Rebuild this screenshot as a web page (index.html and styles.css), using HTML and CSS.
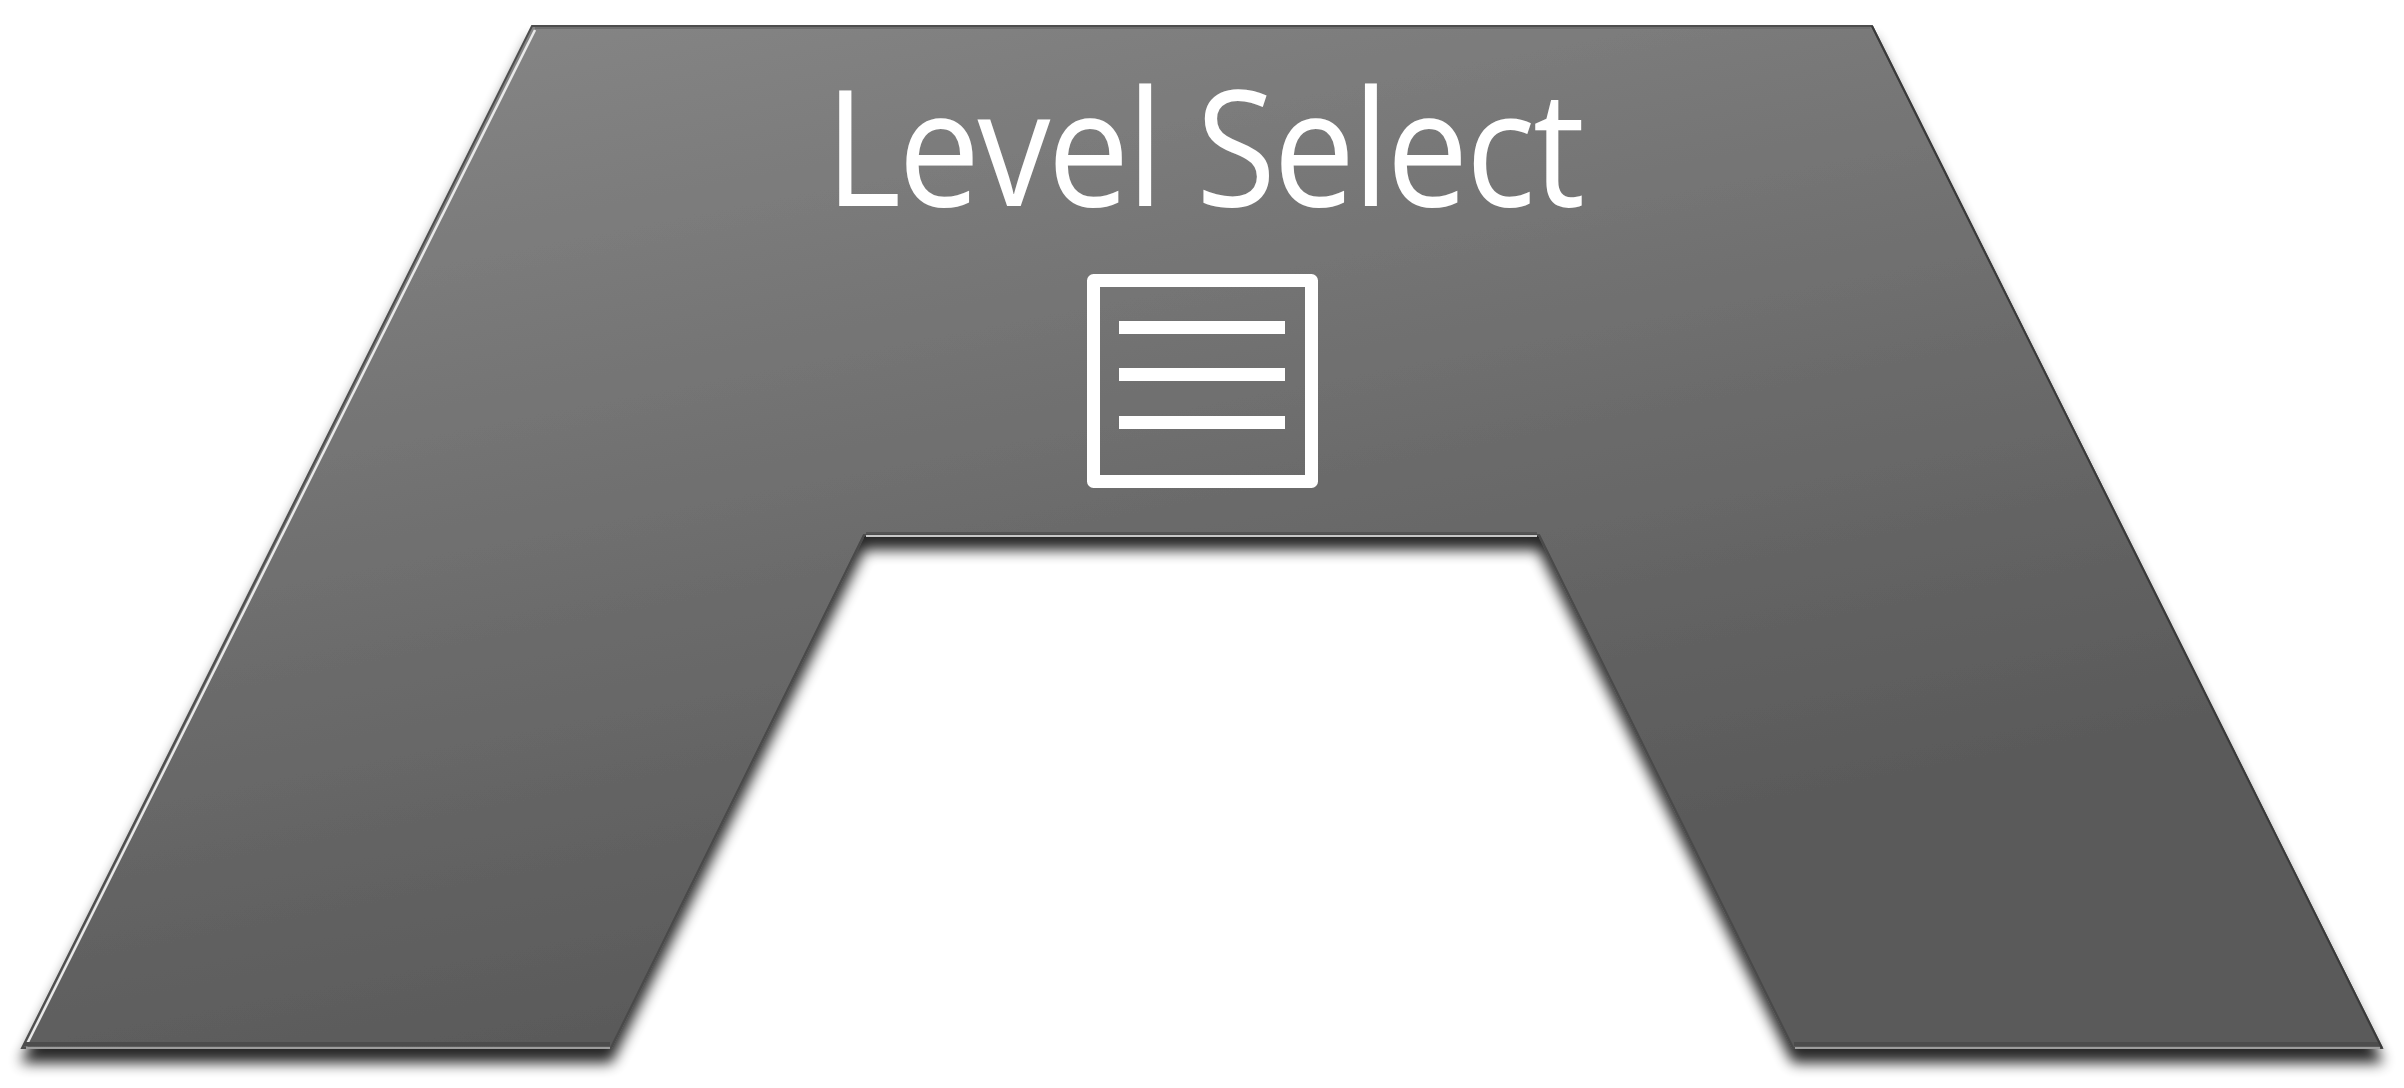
FILE: index.html
```html
<!DOCTYPE html>
<html lang="en">
<head>
<meta charset="utf-8">
<title>Level Select</title>
<link rel="stylesheet" href="styles.css">
</head>
<body>
<div class="stage">
  <svg class="plate" width="2404" height="1088" viewBox="0 0 2404 1088" aria-hidden="true">
    <defs>
      <linearGradient id="fill" x1="300" y1="26" x2="500" y2="1048" gradientUnits="userSpaceOnUse">
        <stop offset="0" stop-color="#868686"/>
        <stop offset="1" stop-color="#5a5a5a"/>
      </linearGradient>
      <filter id="shadow" x="-5%" y="-5%" width="110%" height="115%">
        <feGaussianBlur in="SourceAlpha" stdDeviation="7"/>
        <feOffset dx="0" dy="14" result="b"/>
        <feComponentTransfer><feFuncA type="linear" slope="0.85"/></feComponentTransfer>
        <feMerge><feMergeNode/><feMergeNode in="SourceGraphic"/></feMerge>
      </filter>
    </defs>
    <g filter="url(#shadow)">
      <polygon points="532,26 1872,26 2382,1048 1793,1048 1539,535 864,535 611,1048 22,1048" fill="url(#fill)" stroke="#4e4e4e" stroke-width="2" stroke-linejoin="miter"/>
    </g>
    <line x1="535" y1="30" x2="26" y2="1046" stroke="#e8e8e8" stroke-width="2.5"/>
    <line x1="535" y1="28" x2="1870" y2="28" stroke="#6f6f6f" stroke-width="2"/>
    <line x1="24" y1="1044" x2="610" y2="1044" stroke="#4c4c4c" stroke-width="4"/>
    <line x1="26" y1="1048" x2="610" y2="1048" stroke="#9c9c9c" stroke-width="2"/>
    <line x1="1794" y1="1044" x2="2380" y2="1044" stroke="#4c4c4c" stroke-width="4"/>
    <line x1="1795" y1="1048" x2="2380" y2="1048" stroke="#9c9c9c" stroke-width="2"/>
    <line x1="866" y1="533" x2="1537" y2="533" stroke="#555555" stroke-width="2"/>
    <line x1="866" y1="536" x2="1537" y2="536" stroke="#c8c8c8" stroke-width="2"/>
    <line x1="1872" y1="26" x2="2382" y2="1048" stroke="#3a3a3a" stroke-width="2"/>
    <line x1="864" y1="535" x2="611" y2="1048" stroke="#4a4a4a" stroke-width="2"/>
    <line x1="1539" y1="535" x2="1793" y2="1048" stroke="#4a4a4a" stroke-width="2"/>
  </svg>
  <div class="content">
    <h1 class="title">Level Select</h1>
    <svg class="menu-icon" width="231" height="214" viewBox="0 0 231 214" aria-hidden="true">
      <rect x="6.5" y="6.5" width="218" height="201" fill="none" stroke="#ffffff" stroke-width="13" stroke-linejoin="round"/>
      <rect x="32" y="47" width="166" height="13" fill="#ffffff"/>
      <rect x="32" y="94" width="166" height="13" fill="#ffffff"/>
      <rect x="32" y="142" width="166" height="13" fill="#ffffff"/>
    </svg>
  </div>
</div>
</body>
</html>
```

FILE: styles.css
```css
html, body {
  margin: 0;
  padding: 0;
  background: #ffffff;
  overflow: hidden;
}

.stage {
  position: relative;
  width: 2404px;
  height: 1088px;
}

.plate {
  position: absolute;
  left: 0;
  top: 0;
  display: block;
}

.content {
  position: relative;
  display: flex;
  flex-direction: column;
  align-items: center;
  padding-top: 62px;
  width: 2404px;
  box-sizing: border-box;
}

.title {
  margin: 0;
  padding-left: 3px;
  font-family: "Open Sans", "Noto Sans", sans-serif;
  font-weight: 400;
  font-size: 162px;
  line-height: 162px;
  letter-spacing: -3px;
  color: #ffffff;
  white-space: nowrap;
  transform: scaleX(0.9);
  transform-origin: center;
}

.menu-icon {
  display: block;
  margin-top: 50px;
}
```
